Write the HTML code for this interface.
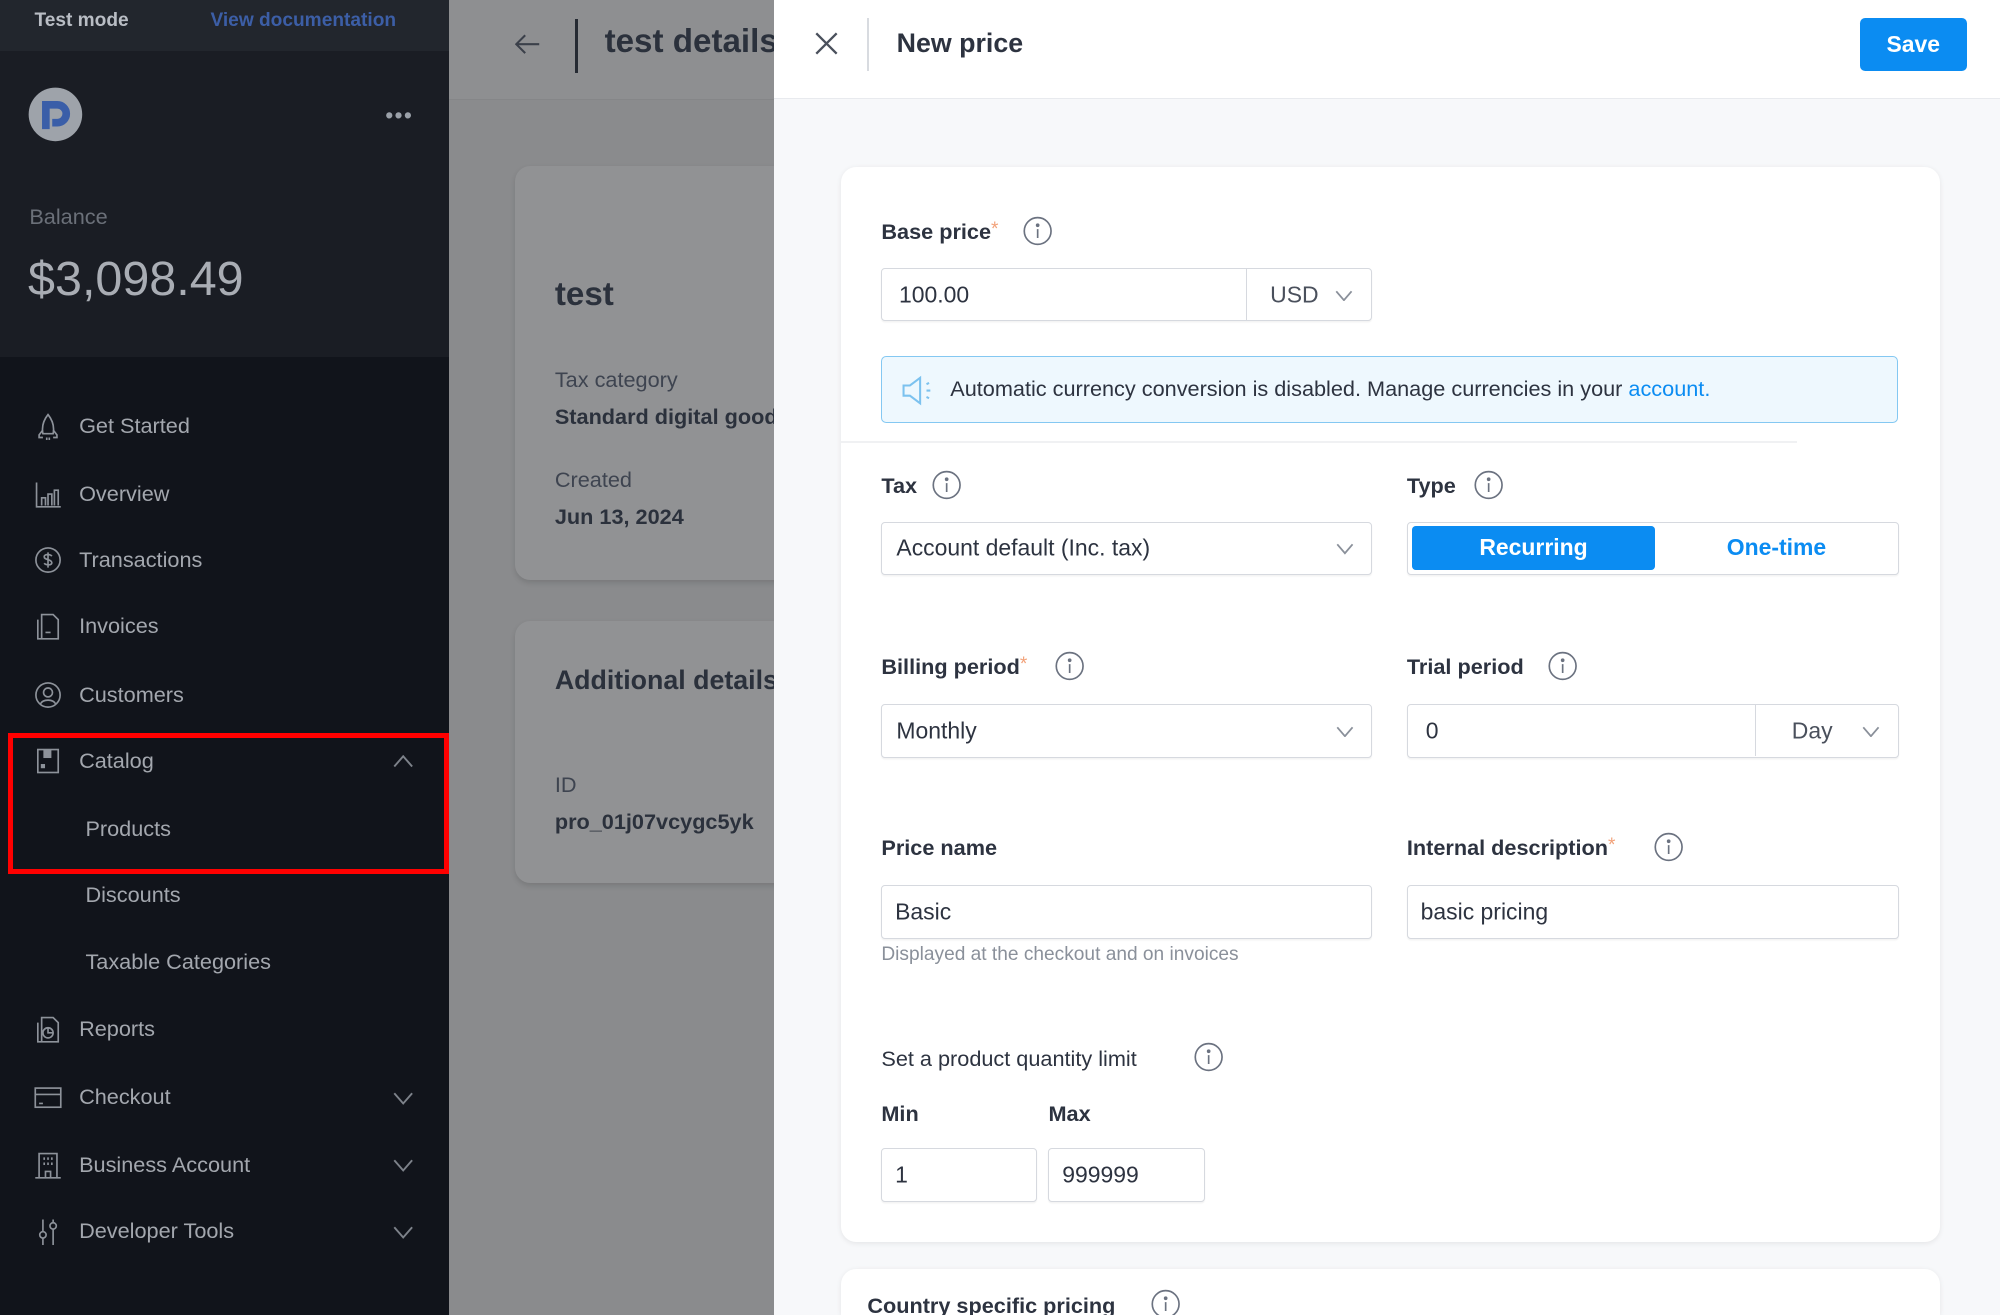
<!DOCTYPE html>
<html><head><meta charset="utf-8">
<style>
html,body{margin:0;padding:0;overflow:hidden;}
html{zoom:1.27551;background:#f7f8fa;}
#w{width:1568px;height:1031px;overflow:hidden;position:relative;font-family:"Liberation Sans",sans-serif;background:#8a8b8d;}
.a{position:absolute;white-space:nowrap;}
.nav{position:absolute;left:62px;font-size:17px;color:#a3a7ae;transform:translateY(-50%);}
.ic{position:absolute;left:27px;width:22px;height:22px;}
.chev{position:absolute;left:308px;width:16px;height:10px;}
.lbl{position:absolute;font-size:17px;font-weight:bold;color:#2d3340;transform:translateY(-50%);white-space:nowrap;}
.star{color:#f2a27a;font-weight:normal;vertical-align:top;font-size:15px;}
.inp{position:absolute;background:#fff;border:1px solid #d6d9df;border-radius:3px;box-sizing:border-box;box-shadow:0 1px 1px rgba(0,0,0,.05);}
.tx{position:absolute;font-size:18px;color:#2d3340;top:50%;transform:translateY(-50%);white-space:nowrap;}
.info{position:absolute;width:23px;height:23px;transform:translateY(-50%);}
.sel{position:absolute;width:14px;height:9px;top:50%;margin-top:-4px;}
</style></head><body><div id="w">
<!-- sidebar -->
<div class="a" style="left:0;top:0;width:352px;height:1031px;background:#11141b;"></div>
<div class="a" style="left:0;top:0;width:352px;height:40px;background:#22262d;"></div>
<div class="a" style="left:0;top:40px;width:352px;height:240px;background:#1a1d24;"></div>
<div class="a" style="left:27px;top:8px;font-size:15px;font-weight:bold;color:#b9bdc4;">Test mode</div>
<div class="a" style="left:165px;top:8px;font-size:15px;font-weight:bold;color:#3c5ea6;">View documentation</div>
<svg class="a" style="left:22px;top:68px" width="43" height="43" viewBox="0 0 43 43"><circle cx="21.5" cy="21.5" r="21" fill="#9ea3aa"/><path d="M14 33V14h9a7 7 0 0 1 0 14h-4" fill="none" stroke="#3a5ea8" stroke-width="6"/></svg>
<div class="a" style="left:302px;top:80px;font-size:18px;color:#9aa0a8;letter-spacing:1px;">•••</div>
<div class="a" style="left:23px;top:160px;font-size:17px;color:#6b7079;">Balance</div>
<div class="a" style="left:22px;top:197px;font-size:38px;color:#a9adb4;">$3,098.49</div>

<svg class="ic" style="top:323px" viewBox="0 0 22 22" fill="none" stroke="#8d929a" stroke-width="1.3"><path d="M11 2C7 7 6 12 7 17h8c1-5 0-10-4-15zM7 14l-3 4v2h3M15 14l3 4v2h-3M10 20v2M12 20v2"/></svg>
<div class="nav" style="top:334px">Get Started</div>
<svg class="ic" style="top:376px" viewBox="0 0 22 22" fill="none" stroke="#8d929a" stroke-width="1.3"><path d="M2 2v19h19M6 20v-6h3v6M11 20v-9h3v9M16 20V8h3v12"/></svg>
<div class="nav" style="top:387px">Overview</div>
<svg class="ic" style="top:428px" viewBox="0 0 22 22" fill="none" stroke="#8d929a" stroke-width="1.3"><circle cx="11" cy="11" r="9.5"/><path d="M14 8c-1-1.5-6-2-6 .5S14 10.5 14 13s-5 2-6 .5M11 5v12"/></svg>
<div class="nav" style="top:439px">Transactions</div>
<svg class="ic" style="top:480px" viewBox="0 0 22 22" fill="none" stroke="#8d929a" stroke-width="1.3"><path d="M6 2h9l4 4v15H6zM3 6v15h3M9 16h4"/></svg>
<div class="nav" style="top:491px">Invoices</div>
<svg class="ic" style="top:534px" viewBox="0 0 22 22" fill="none" stroke="#8d929a" stroke-width="1.3"><circle cx="11" cy="11" r="9.5"/><circle cx="11" cy="9" r="3.5"/><path d="M5 18c2-4 10-4 12 0"/></svg>
<div class="nav" style="top:545px">Customers</div>
<svg class="ic" style="top:586px" viewBox="0 0 22 22" fill="none" stroke="#8d929a" stroke-width="1.3"><rect x="3" y="2" width="16" height="18"/><rect x="8" y="3" width="5" height="5" fill="#8d929a"/><rect x="6" y="14" width="2" height="2" fill="#8d929a"/></svg>
<div class="nav" style="top:597px">Catalog</div>
<svg class="chev" style="top:592px" viewBox="0 0 16 10" fill="none" stroke="#7d828a" stroke-width="1.5"><path d="M1 9l7-8 7 8"/></svg>
<div class="nav" style="top:650px;left:67px">Products</div>
<div class="nav" style="top:702px;left:67px">Discounts</div>
<div class="nav" style="top:754px;left:67px">Taxable Categories</div>
<svg class="ic" style="top:796px" viewBox="0 0 22 22" fill="none" stroke="#8d929a" stroke-width="1.3"><path d="M6 2h9l4 4v15H6zM3 6v15h3"/><circle cx="11" cy="14" r="4"/><path d="M11 10v4h4"/></svg>
<div class="nav" style="top:807px">Reports</div>
<svg class="ic" style="top:849px" viewBox="0 0 22 22" fill="none" stroke="#8d929a" stroke-width="1.3"><rect x="1" y="4" width="20" height="15"/><path d="M1 9h20M4 16h3"/></svg>
<div class="nav" style="top:860px">Checkout</div>
<svg class="chev" style="top:856px" viewBox="0 0 16 10" fill="none" stroke="#7d828a" stroke-width="1.5"><path d="M1 1l7 8 7-8"/></svg>
<svg class="ic" style="top:902px" viewBox="0 0 22 22" fill="none" stroke="#8d929a" stroke-width="1.3"><path d="M4 21V2h14v19M1 21h20M8 5v2M11 5v2M14 5v2M8 9v2M11 9v2M14 9v2M9 21v-5h4v5"/></svg>
<div class="nav" style="top:913px">Business Account</div>
<svg class="chev" style="top:909px" viewBox="0 0 16 10" fill="none" stroke="#7d828a" stroke-width="1.5"><path d="M1 1l7 8 7-8"/></svg>
<svg class="ic" style="top:954px" viewBox="0 0 22 22" fill="none" stroke="#8d929a" stroke-width="1.3"><path d="M7 2v20M15 2v20"/><circle cx="7" cy="14" r="2.5" fill="#11141b"/><circle cx="15" cy="7" r="2.5" fill="#11141b"/></svg>
<div class="nav" style="top:965px">Developer Tools</div>
<svg class="chev" style="top:961px" viewBox="0 0 16 10" fill="none" stroke="#7d828a" stroke-width="1.5"><path d="M1 1l7 8 7-8"/></svg>
<div class="a" style="left:6px;top:575px;width:338px;height:102px;border:4px solid #ff0000;"></div>

<!-- main dimmed area -->
<div class="a" style="left:352px;top:0;width:255px;height:78px;background:#8e8f91;border-bottom:1px solid #858688;"></div>
<svg class="a" style="left:404px;top:27px" width="20" height="16" viewBox="0 0 20 16" fill="none" stroke="#3b404a" stroke-width="1.6"><path d="M19 8H2M8 1L1 8l7 7"/></svg>
<div class="a" style="left:451px;top:15px;width:2px;height:42px;background:#262b33;"></div>
<div class="a" style="left:474px;top:18px;font-size:26px;font-weight:bold;color:#2b313c;">test details</div>
<div class="a" style="left:404px;top:130px;width:230px;height:325px;background:#919294;border-radius:12px;box-shadow:0 2px 4px rgba(0,0,0,.12);"></div>
<div class="a" style="left:435px;top:216px;font-size:26px;font-weight:bold;color:#2b313c;">test</div>
<div class="a" style="left:435px;top:288px;font-size:17px;color:#3e4450;">Tax category</div>
<div class="a" style="left:435px;top:317px;font-size:17px;font-weight:bold;color:#2b313c;">Standard digital goods</div>
<div class="a" style="left:435px;top:366px;font-size:17px;color:#3e4450;">Created</div>
<div class="a" style="left:435px;top:395px;font-size:17px;font-weight:bold;color:#2b313c;">Jun 13, 2024</div>
<div class="a" style="left:404px;top:487px;width:230px;height:205px;background:#919294;border-radius:12px;box-shadow:0 2px 4px rgba(0,0,0,.12);"></div>
<div class="a" style="left:435px;top:521px;font-size:21px;font-weight:bold;color:#2b313c;">Additional details</div>
<div class="a" style="left:435px;top:605px;font-size:17px;color:#3e4450;">ID</div>
<div class="a" style="left:435px;top:634px;font-size:17px;font-weight:bold;color:#2b313c;">pro_01j07vcygc5yk</div>

<!-- panel -->
<div class="a" style="left:607px;top:0;width:961px;height:1031px;background:#f7f8fa;"></div>
<div class="a" style="left:607px;top:0;width:961px;height:77px;background:#fff;border-bottom:1px solid #e8eaee;"></div>
<svg class="a" style="left:639px;top:25px" width="18" height="18" viewBox="0 0 18 18" stroke="#4a505c" stroke-width="1.8"><path d="M1 1l16 16M17 1L1 17"/></svg>
<div class="a" style="left:680px;top:14px;width:1px;height:42px;background:#d8dbe0;"></div>
<div class="a" style="left:703px;top:22px;font-size:21px;font-weight:bold;color:#2d3340;">New price</div>
<div class="a" style="left:1458px;top:14px;width:84px;height:42px;background:#0b8cf2;border-radius:4px;color:#fff;font-size:18px;font-weight:bold;text-align:center;line-height:42px;">Save</div>

<div class="a" style="left:659px;top:131px;width:862px;height:843px;background:#fff;border-radius:12px;box-shadow:0 1px 4px rgba(0,0,0,.08);"></div>
<div class="a" style="left:659px;top:995px;width:862px;height:36px;background:#fff;border-radius:12px 12px 0 0;box-shadow:0 1px 4px rgba(0,0,0,.08);"></div>
<div class="lbl" style="left:680px;top:1024px">Country specific pricing</div>
<svg class="info" style="left:902px;top:1022px" viewBox="0 0 23 23" fill="none" stroke="#6b7280" stroke-width="1.3"><circle cx="11.5" cy="11.5" r="10.5"/><path d="M11.5 10v7"/><circle cx="11.5" cy="7" r=".8" fill="#6b7280"/></svg>

<div class="lbl" style="left:691px;top:182px">Base price<span class="star">*</span></div>
<svg class="info" style="left:802px;top:181px" viewBox="0 0 23 23" fill="none" stroke="#6b7280" stroke-width="1.3"><circle cx="11.5" cy="11.5" r="10.5"/><path d="M11.5 10v7"/><circle cx="11.5" cy="7" r=".8" fill="#6b7280"/></svg>
<div class="inp" style="left:691px;top:210px;width:385px;height:42px;">
  <div class="tx" style="left:13px">100.00</div>
  <div class="a" style="left:285px;top:0;width:1px;height:40px;background:#d6d9df;"></div>
  <div class="tx" style="left:304px;color:#4a505c">USD</div>
  <svg class="sel" style="left:355px" viewBox="0 0 14 9" fill="none" stroke="#8a909a" stroke-width="1.4"><path d="M1 1l6 7 6-7"/></svg>
</div>
<div class="a" style="left:691px;top:279px;width:797px;height:53px;background:#eef8fe;border:1px solid #84c8f2;border-radius:4px;box-sizing:border-box;"></div>
<svg class="a" style="left:706px;top:293px" width="28" height="26" viewBox="0 0 28 26" fill="none" stroke="#7cc2ef" stroke-width="1.6"><path d="M2 9h5l8-6v20l-8-6H2z"/><path d="M20 8l2-1M20 13h3M20 18l2 1"/></svg>
<div class="a" style="left:745px;top:295px;font-size:17px;color:#2d3340;">Automatic currency conversion is disabled. Manage currencies in your <span style="color:#0b8cf2">account.</span></div>
<div class="a" style="left:659px;top:346px;width:750px;height:1px;background:#f0f1f3;"></div>

<div class="lbl" style="left:691px;top:381px">Tax</div>
<svg class="info" style="left:731px;top:380px" viewBox="0 0 23 23" fill="none" stroke="#6b7280" stroke-width="1.3"><circle cx="11.5" cy="11.5" r="10.5"/><path d="M11.5 10v7"/><circle cx="11.5" cy="7" r=".8" fill="#6b7280"/></svg>
<div class="lbl" style="left:1103px;top:381px">Type</div>
<svg class="info" style="left:1156px;top:380px" viewBox="0 0 23 23" fill="none" stroke="#6b7280" stroke-width="1.3"><circle cx="11.5" cy="11.5" r="10.5"/><path d="M11.5 10v7"/><circle cx="11.5" cy="7" r=".8" fill="#6b7280"/></svg>
<div class="inp" style="left:691px;top:409px;width:385px;height:42px;">
  <div class="tx" style="left:11px">Account default (Inc. tax)</div>
  <svg class="sel" style="left:356px" viewBox="0 0 14 9" fill="none" stroke="#8a909a" stroke-width="1.4"><path d="M1 1l6 7 6-7"/></svg>
</div>
<div class="inp" style="left:1103px;top:409px;width:386px;height:42px;">
  <div class="a" style="left:3px;top:3px;width:191px;height:34px;background:#0b8cf2;border-radius:3px;color:#fff;font-size:18px;font-weight:bold;text-align:center;line-height:34px;">Recurring</div>
  <div class="a" style="left:194px;top:3px;width:190px;height:34px;color:#0b8cf2;font-size:18px;font-weight:bold;text-align:center;line-height:34px;">One-time</div>
</div>

<div class="lbl" style="left:691px;top:523px">Billing period<span class="star">*</span></div>
<svg class="info" style="left:827px;top:522px" viewBox="0 0 23 23" fill="none" stroke="#6b7280" stroke-width="1.3"><circle cx="11.5" cy="11.5" r="10.5"/><path d="M11.5 10v7"/><circle cx="11.5" cy="7" r=".8" fill="#6b7280"/></svg>
<div class="lbl" style="left:1103px;top:523px">Trial period</div>
<svg class="info" style="left:1214px;top:522px" viewBox="0 0 23 23" fill="none" stroke="#6b7280" stroke-width="1.3"><circle cx="11.5" cy="11.5" r="10.5"/><path d="M11.5 10v7"/><circle cx="11.5" cy="7" r=".8" fill="#6b7280"/></svg>
<div class="inp" style="left:691px;top:552px;width:385px;height:42px;">
  <div class="tx" style="left:11px">Monthly</div>
  <svg class="sel" style="left:356px" viewBox="0 0 14 9" fill="none" stroke="#8a909a" stroke-width="1.4"><path d="M1 1l6 7 6-7"/></svg>
</div>
<div class="inp" style="left:1103px;top:552px;width:386px;height:42px;">
  <div class="tx" style="left:14px">0</div>
  <div class="a" style="left:272px;top:0;width:1px;height:40px;background:#d6d9df;"></div>
  <div class="tx" style="left:301px;color:#4a505c">Day</div>
  <svg class="sel" style="left:356px" viewBox="0 0 14 9" fill="none" stroke="#8a909a" stroke-width="1.4"><path d="M1 1l6 7 6-7"/></svg>
</div>

<div class="lbl" style="left:691px;top:665px">Price name</div>
<div class="lbl" style="left:1103px;top:665px">Internal description<span class="star">*</span></div>
<svg class="info" style="left:1297px;top:664px" viewBox="0 0 23 23" fill="none" stroke="#6b7280" stroke-width="1.3"><circle cx="11.5" cy="11.5" r="10.5"/><path d="M11.5 10v7"/><circle cx="11.5" cy="7" r=".8" fill="#6b7280"/></svg>
<div class="inp" style="left:691px;top:694px;width:385px;height:42px;"><div class="tx" style="left:10px">Basic</div></div>
<div class="inp" style="left:1103px;top:694px;width:386px;height:42px;"><div class="tx" style="left:10px">basic pricing</div></div>
<div class="a" style="left:691px;top:740px;font-size:15px;color:#8a909a;">Displayed at the checkout and on invoices</div>

<div class="a" style="left:691px;top:820px;font-size:17px;color:#2d3340;">Set a product quantity limit</div>
<svg class="info" style="left:936px;top:829px" viewBox="0 0 23 23" fill="none" stroke="#6b7280" stroke-width="1.3"><circle cx="11.5" cy="11.5" r="10.5"/><path d="M11.5 10v7"/><circle cx="11.5" cy="7" r=".8" fill="#6b7280"/></svg>
<div class="lbl" style="left:691px;top:873px">Min</div>
<div class="lbl" style="left:822px;top:873px">Max</div>
<div class="inp" style="left:691px;top:900px;width:122px;height:42px;"><div class="tx" style="left:10px">1</div></div>
<div class="inp" style="left:822px;top:900px;width:123px;height:42px;"><div class="tx" style="left:10px">999999</div></div>
</div></body></html>
